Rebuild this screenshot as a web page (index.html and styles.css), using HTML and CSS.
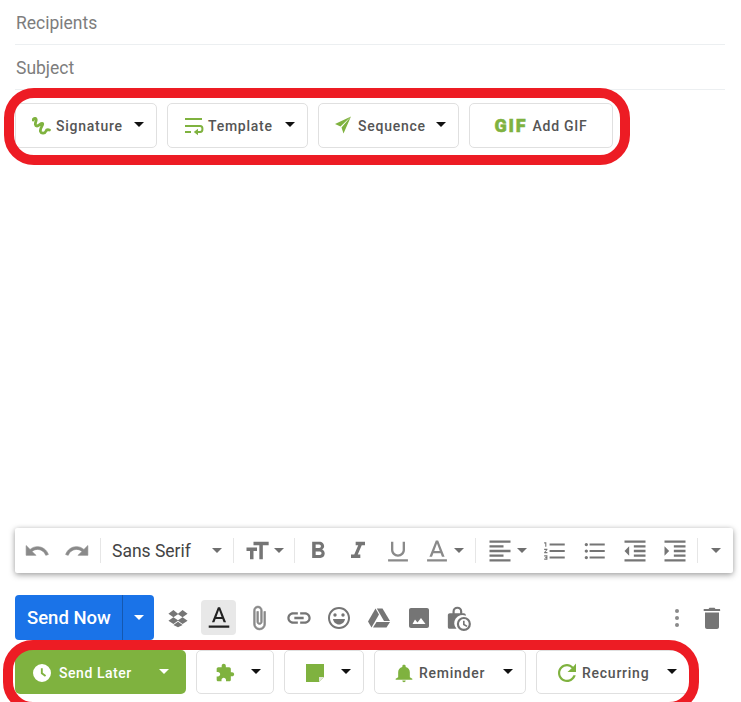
FILE: index.html
```html
<!DOCTYPE html>
<html lang="en">
<head>
<meta charset="utf-8">
<title>Compose</title>
<link rel="stylesheet" href="styles.css">
</head>
<body>
<main class="compose">
  <div class="field">Recipients</div>
  <div class="field">Subject</div>

  <div class="btn-row top-row">
    <button class="btn w-signature"><svg class="ic20 green" viewBox="0 0 20 20"><path class="stroke" d="M1 4C2 1.500 5 2 4 5 3 8 3 10 5 10 7 10 9 6.500 10.500 7.500 12 8.500 7.500 12 8.500 15.500 9.500 18 13 17.500 14 15 14.500 13.500 15.500 13.500 17.500 14"/></svg><span>Signature</span><i class="caret"></i></button>
    <button class="btn w-template"><svg class="ic20 green" viewBox="0 0 20 20"><path d="M1 2h17v2H1zM1 9h13v2H1zM1 15h6v2H1z"/><path class="stroke" d="M12 10h4.200c3 0 3 6 0 6H13"/><path d="M14 12.800v6.400L9.800 16z"/></svg><span>Template</span><i class="caret"></i></button>
    <button class="btn w-sequence"><svg class="ic20 green" viewBox="0 0 20 20"><path d="M18 .5 2 8l5.500 2.500zM18 .5 8.500 11.500l2 6z"/></svg><span>Sequence</span><i class="caret"></i></button>
    <button class="btn w-gif"><span class="gif">GIF</span><span>Add GIF</span></button>
  </div>

  <div class="editor"></div>

  <div class="format-bar">
    <div class="tool tool-first"><svg class="ic26 soft" viewBox="0 0 24 24"><path class="thick" d="M12.500 8c-2.650 0-5.050.99-6.900 2.600L2 7v9h9l-3.620-3.620c1.390-1.160 3.160-1.880 5.120-1.880 3.540 0 6.550 2.310 7.600 5.500l2.370-.78C21.080 11.030 17.150 8 12.500 8z"/></svg></div>
    <div class="tool"><svg class="ic26 soft" viewBox="0 0 24 24"><path class="thick" d="M18.400 10.600C16.550 8.990 14.150 8 11.500 8c-4.650 0-8.580 3.030-9.960 7.220L3.900 16c1.050-3.190 4.050-5.500 7.600-5.500 1.950 0 3.730.72 5.120 1.880L13 16h9V7l-3.600 3.600z"/></svg></div>
    <span class="sep sep-a"></span>
    <div class="font-select"><span>Sans Serif</span><i class="caret-s"></i></div>
    <span class="sep"></span>
    <div class="group g-size"><svg class="ic28" viewBox="0 0 24 24"><path d="M9 4v3h5v12h3V7h5V4H9zm-6 8h3v7h3v-7h3V9H3v3z"/></svg><i class="caret-s"></i></div>
    <span class="sep"></span>
    <div class="tool tool-b"><svg class="ic28" viewBox="0 0 24 24"><path d="M15.600 10.790c.97-.67 1.650-1.770 1.650-2.790 0-2.260-1.750-4-4-4H7v14h7.040c2.090 0 3.710-1.700 3.710-3.790 0-1.520-.86-2.820-2.150-3.420zM10 6.500h3c.83 0 1.500.67 1.500 1.500s-.67 1.500-1.500 1.500h-3v-3zm3.500 9H10v-3h3.500c.83 0 1.500.67 1.500 1.500s-.67 1.500-1.500 1.500z"/></svg></div>
    <div class="tool"><svg class="ic28" viewBox="0 0 24 24"><path d="M10 4v3h2.210l-3.420 8H6v3h8v-3h-2.210l3.420-8H18V4z"/></svg></div>
    <div class="tool"><svg class="ic28 soft" viewBox="0 0 24 24"><path d="M12 17c3.310 0 6-2.690 6-6V4h-2v7c0 2.200-1.800 4-4 4s-4-1.800-4-4V4H6v7c0 3.310 2.690 6 6 6zm-8.500 2v2h17v-2h-17z"/></svg></div>
    <div class="group g-color"><svg class="ic28 soft" viewBox="0 0 24 24"><path d="M11 3 5.500 17h2.250l1.120-3h6.250l1.120 3h2.250L13 3h-2zm-1.380 9L12 5.670 14.380 12H9.620zM3.500 19h17v2h-17z"/></svg><i class="caret-s"></i></div>
    <span class="sep"></span>
    <div class="group g-align"><svg class="ic28" viewBox="0 0 24 24"><path d="M15 15H3v2h12v-2zm0-8H3v2h12V7zM3 13h18v-2H3v2zm0 8h18v-2H3v2zM3 3v2h18V3H3z"/></svg><i class="caret-s"></i></div>
    <div class="tool"><svg class="ic26" viewBox="0 0 24 24"><path d="M2 17h2v.5H3v1h1v.5H2v1h3v-4H2v1zm1-9h1V4H2v1h1v3zm-1 3h1.800L2 13.100v.9h3v-1H3.200L5 10.900V10H2v1zm5-6v2h14V5H7zm0 14h14v-2H7v2zm0-6h14v-2H7v2z"/></svg></div>
    <div class="tool"><svg class="ic26" viewBox="0 0 24 24"><path d="M4 10.500c-.83 0-1.500.67-1.500 1.500s.67 1.500 1.500 1.500 1.500-.67 1.500-1.500-.67-1.500-1.500-1.500zm0-6c-.83 0-1.500.67-1.500 1.500S3.170 7.500 4 7.500 5.500 6.830 5.500 6 4.830 4.500 4 4.500zm0 12c-.83 0-1.500.68-1.500 1.500s.68 1.500 1.500 1.500 1.500-.68 1.500-1.500-.67-1.500-1.500-1.500zM7 19h14v-2H7v2zm0-6h14v-2H7v2zm0-8v2h14V5H7z"/></svg></div>
    <div class="tool"><svg class="ic28" viewBox="0 0 24 24"><path d="M11 17h10v-2H11v2zm-8-5 4 4V8l-4 4zm0 9h18v-2H3v2zM3 3v2h18V3H3zm8 6h10V7H11v2zm0 4h10v-2H11v2z"/></svg></div>
    <div class="tool"><svg class="ic28" viewBox="0 0 24 24"><path d="M3 21h18v-2H3v2zM3 8v8l4-4-4-4zm8 9h10v-2H11v2zM3 3v2h18V3H3zm8 6h10V7H11v2zm0 4h10v-2H11v2z"/></svg></div>
    <span class="sep sep-z"></span>
    <div class="group g-more"><i class="caret-s"></i></div>
  </div>

  <div class="send-row">
    <div class="send-now"><span class="send-label">Send Now</span><span class="send-arrow"><i class="caret-w"></i></span></div>
    <div class="act act-drop"><svg class="ic20" viewBox="0 0 24 24"><path d="M6.500 2.500 0.500 6.800l6 4.200-6 4.200 6 4 5.500-4 5.500 4 6-4-6-4.200 6-4.200-6-4.300L12 6.800zM12 7.500l5.500 3.500-5.500 3.600L6.500 11z"/><path d="M6.500 20.500 12 16.500l5.500 4L12 23z"/></svg></div>
    <div class="act act-text"><svg class="ic26 dark" viewBox="0 0 24 24"><path d="M11 2 5.500 16h2.250l1.120-3h6.250l1.120 3h2.250L13 2h-2zm-1.380 9L12 4.670 14.380 11H9.620zM2.500 19h19v2h-19z"/></svg></div>
    <div class="act act-first"><svg class="ic26 soft" viewBox="0 0 24 24"><path class="thick" d="M16.500 6v11.500c0 2.210-1.790 4-4 4s-4-1.790-4-4V5c0-1.380 1.120-2.500 2.500-2.500s2.500 1.120 2.500 2.500v10.500c0 .55-.45 1-1 1s-1-.45-1-1V6H10v9.500c0 1.380 1.120 2.500 2.500 2.500s2.500-1.120 2.500-2.500V5c0-2.210-1.790-4-4-4S7 2.790 7 5v12.500c0 3.040 2.460 5.500 5.500 5.500s5.500-2.460 5.500-5.500V6h-1.500z"/></svg></div>
    <div class="act"><svg class="ic28" viewBox="0 0 24 24"><path d="M3.900 12c0-1.710 1.390-3.100 3.100-3.100h4V7H7c-2.760 0-5 2.240-5 5s2.240 5 5 5h4v-1.900H7c-1.710 0-3.100-1.390-3.100-3.100zM8 13h8v-2H8v2zm9-6h-4v1.900h4c1.710 0 3.100 1.390 3.100 3.100s-1.390 3.100-3.100 3.100h-4V17h4c2.760 0 5-2.240 5-5s-2.240-5-5-5z"/></svg></div>
    <div class="act"><svg class="ic24" viewBox="0 0 24 24"><path d="M12 1C5.900 1 1 5.900 1 12s4.900 11 11 11 11-4.900 11-11S18.100 1 12 1zm0 20c-5 0-9-4-9-9s4-9 9-9 9 4 9 9-4 9-9 9z"/><circle cx="8" cy="9" r="1.700"/><circle cx="16" cy="9" r="1.700"/><path d="M6 13h12c-.5 3.200-3 5.500-6 5.500S6.500 16.200 6 13z"/></svg></div>
    <div class="act"><svg class="ic24" viewBox="0 0 24 24"><path d="M8.500 2.500 1 15.500 4.500 21.500 12 8.500z"/><path d="M9.500 16 6 21.500h13.500l3.500-5.500z"/><path d="M9.800 2.500h5.700L23 15h-6z"/></svg></div>
    <div class="act"><svg class="ic24" viewBox="0 0 24 24"><path d="M22 20V4c0-1.100-.9-2-2-2H4c-1.100 0-2 .9-2 2v16c0 1.100.9 2 2 2h16c1.100 0 2-.9 2-2zM8 13.500l2.500 3 3.500-4.500 4.500 6h-13z"/></svg></div>
    <div class="act"><svg class="ic26" viewBox="0 0 24 24"><path d="M6 7.500V6a4.500 4.500 0 0 1 9 0v1.500h1.500c1 0 1.800.8 1.800 1.800v.7A7.500 7.500 0 0 0 9.700 22H3.500c-1 0-1.800-.8-1.800-1.800V9.300c0-1 .8-1.800 1.800-1.800zM8 7.500h5V6a2.500 2.500 0 0 0-5 0z"/><path d="M16.500 11a6.500 6.500 0 1 0 0 13 6.500 6.500 0 0 0 0-13zm0 2a4.500 4.500 0 1 1 0 9 4.500 4.500 0 0 1 0-9zM15.700 14.500v4l3.300 1.900.8-1.300-2.600-1.500v-3.100z"/></svg></div>
    <div class="act act-dots"><svg class="ic24 soft" viewBox="0 0 24 24"><circle cx="12" cy="5" r="2"/><circle cx="12" cy="12" r="2"/><circle cx="12" cy="19" r="2"/></svg></div>
    <div class="act act-trash"><svg class="ic24" viewBox="0 0 24 24"><path d="M5 21c0 1.100.9 2 2 2h10c1.100 0 2-.9 2-2V6.500H5zM20 3h-4.500l-1-1.200h-5L8.500 3H3.700v2h16.500z"/></svg></div>
  </div>

  <div class="btn-row bottom-row">
    <button class="btn later"><svg class="ic18" viewBox="0 0 24 24"><path fill-rule="evenodd" d="M12 0a12 12 0 1 0 0 24 12 12 0 0 0 0-24zm-1.500 5.500h2.500v6.300l4.500 3.200-1.500 2-5.500-4z"/></svg><span>Send Later</span><i class="caret-w"></i></button>
    <button class="btn w-puzzle"><svg class="ic20 green" viewBox="0 0 24 24"><path d="M20.500 11H19V7c0-1.100-.9-2-2-2h-4V3.500C13 2.120 11.880 1 10.500 1S8 2.120 8 3.500V5H4c-1.100 0-1.990.9-1.990 2v3.800H3.500c1.490 0 2.700 1.210 2.700 2.700s-1.210 2.700-2.700 2.700H2V20c0 1.100.9 2 2 2h3.800v-1.500c0-1.490 1.210-2.700 2.700-2.700 1.490 0 2.700 1.210 2.700 2.700V22H17c1.100 0 2-.9 2-2v-4h1.500c1.380 0 2.500-1.120 2.500-2.500S21.880 11 20.500 11z"/></svg><i class="caret"></i></button>
    <button class="btn w-note"><svg class="ic18 green" viewBox="0 0 18 18"><path d="M0 0h18v13l-5 5H0z"/><path class="fold" d="M13 13h5l-5 5z"/></svg><i class="caret"></i></button>
    <button class="btn w-reminder"><svg class="ic20 green" viewBox="0 0 24 24"><path d="M12 23c1.100 0 2-.9 2-2h-4c0 1.100.89 2 2 2zm7-6v-6c0-3.070-1.640-5.640-5-6.320V3.500C14 2.670 13 2 12 2s-2 .67-2 1.500v1.180C6.630 5.360 5 7.920 5 11v6l-3 2v1h20v-1z"/></svg><span>Reminder</span><i class="caret"></i></button>
    <button class="btn w-recurring"><svg class="ic24 green" viewBox="0 0 24 24"><path d="M18.200 5.800C16.600 4.100 14.400 3 12 3 7 3 3 7 3 12s4 9 9 9c4.200 0 7.700-2.900 8.700-6.800h-2.300c-.9 2.700-3.500 4.600-6.400 4.600-3.800 0-6.800-3-6.800-6.800s3-6.800 6.800-6.800c1.900 0 3.500.8 4.700 2L12.500 11H21V2.500z"/></svg><span>Recurring</span><i class="caret"></i></button>
  </div>
</main>
<div class="ring ring-top"></div>
<div class="ring ring-bottom"></div>
</body>
</html>
```
FILE: styles.css
```css
* { box-sizing: border-box; }
html, body { margin: 0; height: 702px; overflow: hidden; background: #fff; }
body { position: relative; font-family: Roboto, "Liberation Sans", sans-serif; color: #505050; }
.compose { display: flex; flex-direction: column; height: 702px; padding: 0 0 8px 15px; }

svg { fill: #757575; display: block; flex: none; }
.ic18 { width: 18px; height: 18px; }
.ic20 { width: 20px; height: 20px; }
.ic24 { width: 24px; height: 24px; }
.ic26 { width: 26px; height: 26px; }
.ic28 { width: 28px; height: 28px; }
.soft { fill: #8a8a8a; }
.dark { fill: #222; }
svg.green { fill: #7fb23f; }
.stroke { fill: none; stroke: #7fb23f; stroke-width: 2.800; stroke-linecap: round; stroke-linejoin: round; }
.w-template .stroke { stroke-width: 2; }
.thick { stroke: #8a8a8a; stroke-width: .6; }
.fold { fill: #e3e8da; }

.field { width: 710px; height: 45px; border-bottom: 1px solid #eceff1; font-size: 17.500px; color: #7d7d7d; display: flex; align-items: center; padding: 2px 0 0 1px; }

.btn-row { display: flex; gap: 10px; }
.top-row { margin-top: 13px; }
.bottom-row { margin-top: 10px; }
.btn { display: flex; align-items: center; gap: 4px; height: 45px; padding: 0 12px 0 16px; background: #fff; border: 1px solid #e0e0e0; border-radius: 5px; font: 500 14px Roboto, sans-serif; letter-spacing: .75px; color: #555; }
.bottom-row .btn { height: 44px; padding-top: 2px; }
.btn .caret, .btn .caret-w { margin-left: auto; margin-bottom: 2px; }
.bottom-row .btn .caret, .bottom-row .btn .caret-w { margin-bottom: 3px; }
.caret { display: block; width: 0; height: 0; border: 5.500px solid transparent; border-top: 5.500px solid #111; border-bottom: 0; flex: none; }
.caret-w { display: block; width: 0; height: 0; border: 5.500px solid transparent; border-top: 5.500px solid #fff; border-bottom: 0; flex: none; }
.caret-s { display: block; width: 0; height: 0; border: 5px solid transparent; border-top: 5px solid #6f6f6f; border-bottom: 0; flex: none; }

.w-signature { width: 142px; }
.w-template { width: 141px; }
.w-sequence { width: 141px; }
.w-sequence { padding-left: 14px; gap: 5px; }
.w-gif { width: 144px; justify-content: center; gap: 5px; padding: 0; }
.gif { font: 900 18px Roboto, sans-serif; letter-spacing: 1.800px; color: #7fb23f; -webkit-text-stroke: .5px #7fb23f; }

.editor { flex: 1; }

.format-bar { display: flex; align-items: center; width: 718px; height: 45px; padding-left: 2px; background: #fff; border-radius: 2px; box-shadow: 0 2px 6px rgba(0,0,0,.35), 0 0 4px rgba(0,0,0,.08); }
.tool { width: 40px; display: flex; justify-content: center; }
.tool-b { margin-left: 3px; }
.sep { width: 1px; height: 25px; background: #e6e6e6; flex: none; }
.sep-a { margin-left: 3px; }
.sep-z { margin-left: 2px; }
.font-select { width: 132px; display: flex; align-items: center; padding: 0 11px; font-size: 17.500px; color: #444; }
.font-select .caret-s { margin-left: auto; }
.group { display: flex; align-items: center; }
.g-size { width: 60px; padding-left: 9px; gap: 3px; }
.g-color { width: 57px; padding-left: 5px; gap: 3px; }
.g-align { width: 59px; padding-left: 10px; gap: 3px; }
.g-more { padding-left: 13px; }

.send-row { display: flex; align-items: center; width: 710px; height: 45px; margin-top: 22px; }
.send-now { display: flex; width: 139px; height: 45px; background: #1a73e8; border-radius: 4px; color: #fff; font-size: 18.500px; font-weight: 500; }
.send-label { width: 108px; padding-left: 12px; display: flex; align-items: center; border-right: 1px solid #1558b0; }
.send-arrow { flex: 1; display: flex; align-items: center; justify-content: center; }
.act { width: 40px; height: 35px; display: flex; align-items: center; justify-content: center; flex: none; }
.act-drop { width: 47px; }
.act-text { width: 35px; background: #e8e8e8; border-radius: 4px; }
.act-first { margin-left: 3px; }
.act-dots { margin-left: auto; margin-right: -5px; }
.act-trash { margin-right: -7px; }

.later { width: 171px; background: #7fb23f; border: 0; color: #fff; padding: 2px 17px 0 18px; gap: 8px; font-size: 14px; letter-spacing: .55px; border-radius: 5px; }
.later svg { fill: #fff; }
.w-puzzle { width: 78px; padding-left: 18px; }
.w-note { width: 80px; padding-left: 21px; }
.w-reminder { width: 152px; padding-left: 19px; gap: 5px; }
.w-recurring { width: 154px; padding-left: 18px; gap: 3px; }

.ring { position: absolute; border: 10px solid #ed1c24; border-radius: 30px; pointer-events: none; }
.ring-top { left: 4px; top: 88px; width: 626px; height: 77px; }
.ring-bottom { left: 3px; top: 640px; width: 696px; height: 72px; }
```
